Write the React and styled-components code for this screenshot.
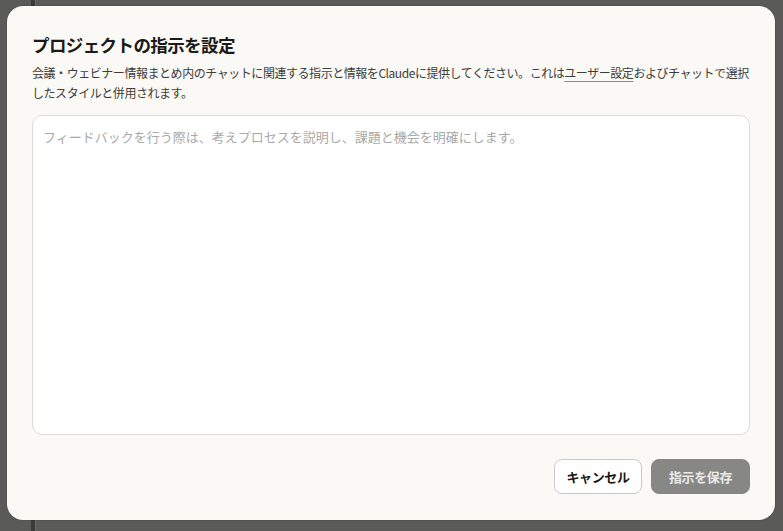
import React, { useState } from "react";
import styled, { createGlobalStyle } from "styled-components";

const GlobalStyle = createGlobalStyle`
  html, body {
    margin: 0;
    padding: 0;
    height: 100%;
  }
  body {
    background-color: #5a5a58;
    background-image: linear-gradient(
      to right,
      transparent 31px,
      #3a3a39 31px,
      #3a3a39 35px,
      #6a6a68 35px,
      #6a6a68 36px,
      transparent 36px
    );
    font-family: "Noto Sans CJK JP", "Noto Sans", sans-serif;
    overflow: hidden;
  }
  #root {
    height: 100%;
  }
`;

const Overlay = styled.div`
  height: 100%;
  box-sizing: border-box;
  padding: 6px 8px 11px 7px;
  display: flex;
  align-items: flex-start;
`;

const Dialog = styled.div`
  width: 768px;
  height: 514px;
  box-sizing: border-box;
  padding: 26px 25px 26px;
  background: #faf9f5;
  border-radius: 16px;
  box-shadow: 0 0 0 1px rgba(0, 0, 0, 0.08);
  display: flex;
  flex-direction: column;
`;

const Title = styled.h2`
  margin: 0 0 6px;
  font-size: 17.5px;
  line-height: 25px;
  font-weight: 700;
  color: #1a1a18;
  letter-spacing: -0.6px;
`;

const Description = styled.p`
  margin: 0;
  font-size: 12px;
  line-height: 20px;
  color: #3d3d3a;
  letter-spacing: -0.45px;
`;

const Link = styled.span`
  text-decoration: underline;
  text-decoration-color: #8a8a86;
  text-underline-offset: 3px;
`;

const Field = styled.textarea`
  margin-top: 12px;
  height: 320px;
  box-sizing: border-box;
  width: 100%;
  padding: 11px 10px;
  border: 1px solid #dddbd5;
  border-radius: 10px;
  background: #ffffff;
  font-family: inherit;
  font-size: 13px;
  line-height: 20px;
  color: #1a1a18;
  resize: none;
  outline: none;

  &::placeholder {
    color: #a9a9a6;
  }
`;

const Footer = styled.div`
  margin-top: 24px;
  display: flex;
  justify-content: flex-end;
  gap: 9px;
`;

const Button = styled.button`
  height: 35px;
  box-sizing: border-box;
  padding: 0 10px;
  border-radius: 8px;
  font-family: inherit;
  font-size: 13px;
  font-weight: 700;
  letter-spacing: -0.4px;
  cursor: pointer;
  border: 1px solid ${(p) => (p.$primary ? "#878786" : "#c9c8c3")};
  background: ${(p) => (p.$primary ? "#878786" : "#ffffff")};
  color: ${(p) => (p.$primary ? "#e9e9e7" : "#1a1a18")};
  width: ${(p) => (p.$primary ? "99px" : "88px")};
`;

export default function App() {
  const [text, setText] = useState("");

  return (
    <>
      <GlobalStyle />
      <Overlay>
        <Dialog>
          <Title>プロジェクトの指示を設定</Title>
          <Description>
            会議・ウェビナー情報まとめ内のチャットに関連する指示と情報をClaudeに提供してください。これは
            <Link>ユーザー設定</Link>
            およびチャットで選択したスタイルと併用されます。
          </Description>
          <Field
            value={text}
            onChange={(e) => setText(e.target.value)}
            placeholder="フィードバックを行う際は、考えプロセスを説明し、課題と機会を明確にします。"
          />
          <Footer>
            <Button>キャンセル</Button>
            <Button $primary>指示を保存</Button>
          </Footer>
        </Dialog>
      </Overlay>
    </>
  );
}
